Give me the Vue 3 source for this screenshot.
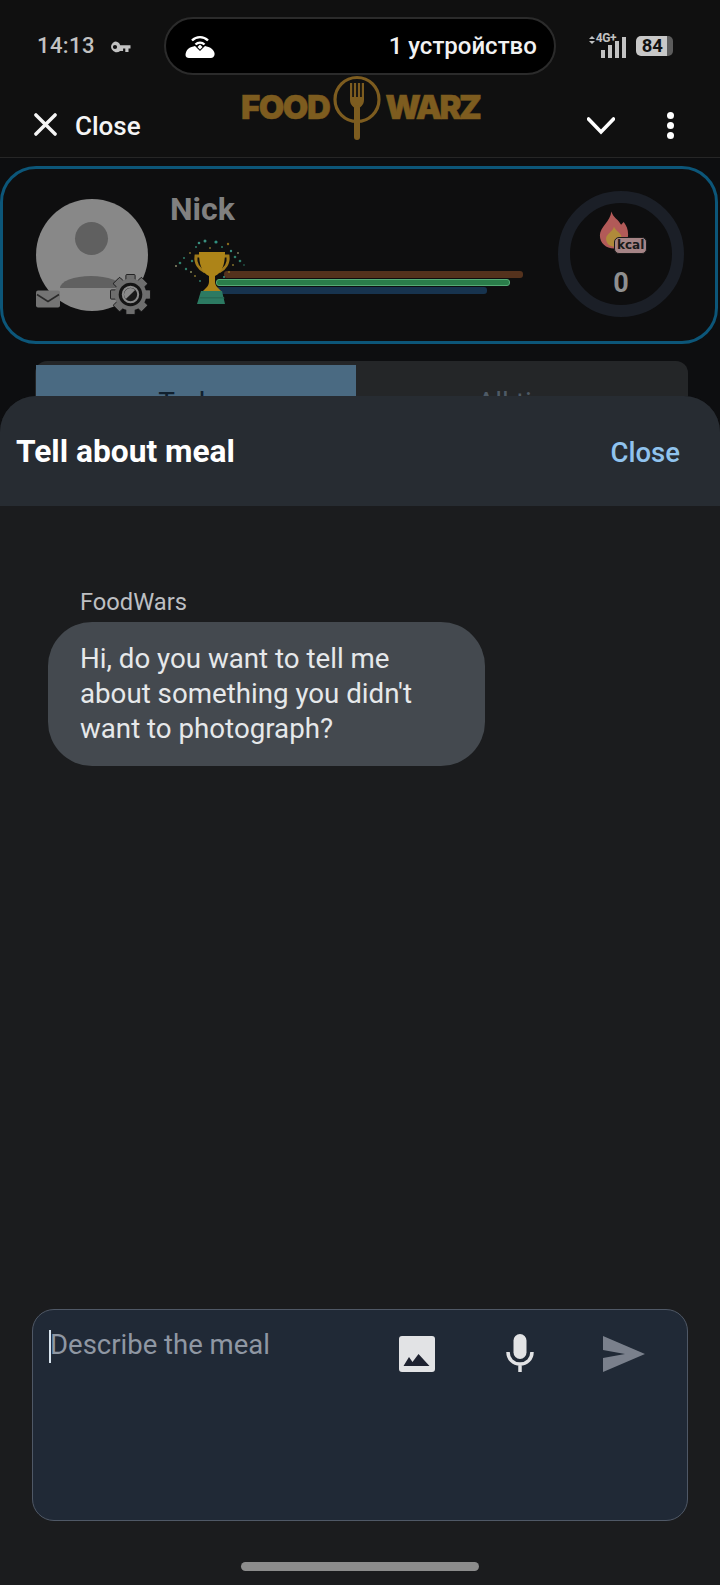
<template>
  <div class="screen">
    <div class="status-bar">
      <span class="time">14:13</span>
      <svg class="key" viewBox="0 0 21 12">
        <path fill-rule="evenodd" d="M5.500 0.500a5.500 5.500 0 0 1 5.200 3.700H21v3.400h-2v3.400h-3.200V7.600h-2.200v2.400h-3A5.500 5.500 0 1 1 5.500 .5zm0 3.400a2.100 2.100 0 1 0 0 4.200 2.100 2.100 0 0 0 0-4.200z" />
      </svg>
      <div class="hotspot-pill">
        <svg class="hotspot-icon" viewBox="0 0 30 24">
          <path d="M3 15C5 13 8 12.500 10 12L15 17l5-5c2 .5 5 1 7 3 2 2 3 4 2.500 6-.5 2-2 3-3.500 3H4c-2 0-3.500-1-3.500-3 0-2 1-4.500 2.500-6z" />
          <path d="M15 10.500l2.500 2.500L15 15.500 12.500 13z" />
          <path class="arc" d="M7 6.500c4.500-4.500 11.500-4.500 16 0M10.500 10.500c2.500-2.500 6.500-2.500 9 0" />
        </svg>
        <span class="pill-text">1 устройство</span>
      </div>
      <div class="signal">
        <span class="net-arrows">
          <i class="up"></i>
          <i class="down"></i>
        </span>
        <span class="net-type">4G+</span>
        <span class="bars">
          <i v-for="h in signalBars" :key="h" :style="{ height: h + 'px' }"></i>
        </span>
      </div>
      <div class="battery">84</div>
    </div>

    <div class="toolbar">
      <button class="close-btn">
        <svg class="x-icon" viewBox="0 0 24 24">
          <path d="M2 2l20 20M22 2L2 22" />
        </svg>
        <span>Close</span>
      </button>
      <div class="toolbar-right">
        <svg class="chevron" viewBox="0 0 28 18">
          <path d="M1.500 2l12.500 13L26.500 2" />
        </svg>
        <div class="dots"><i></i><i></i><i></i></div>
      </div>
      <div class="logo">
        <span>FOOD</span>
        <svg class="fork" viewBox="0 0 56 66">
          <circle class="ring" cx="28" cy="24.500" r="22" />
          <path class="tines" d="M21 8h2.200v14h1.700V8h2.200v14h1.800V8h2.200v14h1.700V8H35v17c0 5-4 8-7 9-3-1-7-4-7-9z" />
          <rect x="25" y="30" width="6" height="35" rx="3" />
        </svg>
        <span class="warz">WARZ</span>
      </div>
    </div>

    <div class="profile-card">
      <div class="avatar">
        <div class="avatar-circle">
          <div class="head"></div>
          <div class="shoulders"></div>
        </div>
        <svg class="mail" viewBox="0 0 24 17">
          <rect width="24" height="17" rx="2" />
          <path d="M1 4l11 7 11-7" />
        </svg>
        <svg class="gear" viewBox="0 0 40 40">
          <rect v-for="a in gearTeeth" :key="a" x="15.500" y="0.500" width="9" height="7" rx="1" :transform="`rotate(${a} 20 20)`" />
          <circle class="gear-body" cx="20" cy="20" r="15.500" />
          <circle class="gear-inner" cx="20" cy="20" r="11.500" />
          <circle class="gear-lens" cx="20" cy="20" r="7.500" />
          <path class="gear-glint" d="M15.500 24.500a6.300 6.300 0 0 1 9-9z" />
        </svg>
      </div>

      <div class="player">
        <div class="name">Nick</div>
        <div class="trophy-row">
          <div class="bars-stack">
            <div class="progress brown"></div>
            <div class="progress green"></div>
            <div class="progress blue"></div>
          </div>
          <svg class="trophy" viewBox="0 0 76 66">
            <circle v-for="(c, i) in confetti" :key="i" :cx="c[0]" :cy="c[1]" :r="c[2]" :fill="c[3]" />
            <path class="handles" d="M28 17h-4c-1 7 3 13 9 16M52 17h4c1 7-3 13-9 16" />
            <path class="cup" d="M27 13h26c0 11-2 20-10 24v6c0 3 2 5 4 7l2 2H31l2-2c2-2 4-4 4-7v-6c-8-4-10-13-10-24z" />
            <path class="base" d="M29 52h21l3 13H25z" />
            <path class="base-top" d="M28 58h24l.5 1.500h-25z" />
          </svg>
        </div>
      </div>

      <div class="calories">
        <svg class="flame" viewBox="0 0 34 42">
          <path class="flame-out" d="M14 0c2 7 8 9 11 15l3-3c3 4 5 8 5 14 0 10-7 16-16 16S1 36 1 27C1 18 13 11 14 0z" />
          <path class="flame-in" d="M17 17c1 4 6 6 8 10 2 5-1 13-8 13-5 0-9-4-9-9 0-6 8-8 9-14z" />
        </svg>
        <span class="kcal">kcal</span>
        <span class="cal-value">0</span>
      </div>
    </div>

    <div class="tabs">
      <div class="tab active">Today</div>
      <div class="tab">All time</div>
    </div>

    <div class="sheet">
      <div class="sheet-header">
        <h2>Tell about meal</h2>
        <span class="sheet-close">Close</span>
      </div>
      <div class="sheet-body">
        <div class="message">
          <div class="sender">FoodWars</div>
          <div class="bubble">Hi, do you want to tell me about something you didn't want to photograph?</div>
        </div>

        <div class="composer">
          <div class="placeholder"><i class="caret"></i>Describe the meal</div>
          <svg class="icon-image" viewBox="0 0 36 36">
            <rect width="36" height="36" rx="3" />
            <path d="M4.500 30l5.500-9 3.500 5 6-8 11 12z" />
          </svg>
          <svg class="icon-mic" viewBox="0 0 28 38">
            <rect x="7.500" y="0" width="13" height="25" rx="6.500" />
            <path class="mic-arc" d="M2 18c0 7 5 12 12 12s12-5 12-12M14 30v8" />
          </svg>
          <svg class="icon-send" viewBox="0 0 42 36">
            <path d="M0 0l42 18L0 36V22l22-4L0 14z" />
          </svg>
        </div>
      </div>
      <div class="home-indicator"></div>
    </div>
  </div>
</template>

<script setup>
const signalBars = [8, 13, 17, 21]
const gearTeeth = [0, 45, 90, 135, 180, 225, 270, 315]

// x, y, r, colour of the bits flying around the cup
const confetti = [
  [4, 27, 1, '#8a8a6a'], [8, 24, 1.300, '#2f7d6a'], [12, 19, 1, '#2f7d6a'],
  [14, 30, 1.200, '#2f7d6a'], [18, 14, 1, '#7a6a2a'], [20, 22, 1.200, '#2f7d6a'],
  [24, 8, 1, '#2f7d6a'], [27, 4, 1.300, '#3a8f80'], [33, 2, 1.500, '#3a8f80'],
  [38, 9, 1, '#7a6a2a'], [44, 3, 1.600, '#2f9080'], [50, 8, 1, '#2f7d6a'],
  [56, 5, 1.200, '#8a6a1a'], [59, 12, 1.200, '#3a8f80'], [63, 18, 1.300, '#2f7d6a'],
  [68, 22, 1.300, '#2f7d6a'], [61, 26, 1.100, '#7a6a2a'], [66, 14, 1, '#7a7a5a'],
  [19, 33, 1, '#8a8a5a'], [23, 37, 1.100, '#7a6a2a'], [57, 33, 1.100, '#8a6a1a'],
  [28, 42, 1, '#2f7d6a'], [52, 38, 1, '#3a8f80'], [72, 26, 0.800, '#2f7d6a'],
]
</script>

<style>
html,
body {
  margin: 0;
  background: #101010;
}
</style>

<style scoped>
.screen {
  position: relative;
  width: 720px;
  height: 1585px;
  overflow: hidden;
  background: #0d0e10;
  font-family: Roboto, "Liberation Sans", sans-serif;
}

.status-bar {
  display: flex;
  align-items: center;
  height: 92px;
  padding-left: 37px;
  box-sizing: border-box;
  background: #101010;
}

.time {
  margin-top: -2px;
  font-size: 22px;
  font-weight: 500;
  color: #c2c2c2;
  letter-spacing: 0.4px;
}

.key {
  width: 22px;
  height: 12px;
  margin: 2px 0 0 14px;
  fill: #c2c2c2;
}

.hotspot-pill {
  display: flex;
  align-items: center;
  justify-content: space-between;
  box-sizing: border-box;
  width: 392px;
  height: 58px;
  margin-left: 33px;
  padding: 0 17px 0 19px;
  background: #000;
  border: 2px solid #2b2b2b;
  border-radius: 29px;
}

.hotspot-icon {
  width: 30px;
  height: 24px;
  fill: #fff;
}

.hotspot-icon .arc {
  fill: none;
  stroke: #fff;
  stroke-width: 2.400;
}

.pill-text {
  font-size: 24px;
  font-weight: 500;
  color: #f2f2f2;
}

.signal {
  position: relative;
  width: 42px;
  height: 24px;
  margin-left: 33px;
}

.net-arrows {
  position: absolute;
  left: 0;
  top: 2px;
  display: flex;
  flex-direction: column;
  gap: 2px;
}

.net-arrows i {
  display: block;
  width: 0;
  height: 0;
  border-left: 3px solid transparent;
  border-right: 3px solid transparent;
}

.net-arrows .up {
  border-bottom: 3px solid #c2c2c2;
}

.net-arrows .down {
  border-top: 3px solid #c2c2c2;
}

.net-type {
  position: absolute;
  left: 7px;
  top: -3px;
  font-size: 12px;
  font-weight: 700;
  color: #c2c2c2;
  letter-spacing: -0.5px;
}

.bars {
  position: absolute;
  right: 0;
  left: 12px;
  bottom: 0;
  display: flex;
  align-items: flex-end;
  gap: 3px;
}

.bars i {
  display: block;
  width: 4px;
  background: #c2c2c2;
}

.battery {
  box-sizing: border-box;
  width: 37px;
  height: 20px;
  margin-left: 5px;
  padding-right: 4px;
  line-height: 20px;
  text-align: center;
  border-radius: 5px;
  background: linear-gradient(90deg, #c8c8c8 84%, #5c5c5c 84%);
  color: #111;
  font-size: 18.500px;
  font-weight: 700;
}

.toolbar {
  position: relative;
  display: flex;
  align-items: center;
  justify-content: space-between;
  box-sizing: border-box;
  height: 66px;
  padding: 0 46px 0 34px;
  background: #101010;
  border-bottom: 1px solid #262626;
}

.close-btn {
  display: flex;
  align-items: center;
  gap: 18px;
  padding: 0;
  background: none;
  border: 0;
  color: #f5f5f5;
  font-family: inherit;
  font-size: 26px;
  font-weight: 500;
}

.close-btn span {
  margin-top: 2px;
}

.x-icon {
  width: 23px;
  height: 23px;
  fill: none;
  stroke: #f5f5f5;
  stroke-width: 3.600;
  stroke-linecap: round;
}

.toolbar-right {
  display: flex;
  align-items: center;
  gap: 52px;
  margin-top: 1px;
}

.chevron {
  width: 28px;
  height: 18px;
  margin-top: 2px;
  fill: none;
  stroke: #fff;
  stroke-width: 3.600;
  stroke-linecap: round;
}

.dots {
  display: flex;
  flex-direction: column;
  gap: 3px;
}

.dots i {
  display: block;
  width: 7px;
  height: 7px;
  border-radius: 50%;
  background: #fff;
}

.logo {
  position: absolute;
  left: 241px;
  top: -17px;
  display: flex;
  align-items: flex-start;
  color: #7d5c1f;
  font-family: Inter, "Liberation Sans", sans-serif;
  font-size: 33px;
  font-weight: 900;
  letter-spacing: -1.500px;
  line-height: 34px;
  -webkit-text-stroke: 0.5px #7d5c1f;
}

.logo span {
  margin-top: 15px;
}

.logo .warz {
  letter-spacing: -2.500px;
}

.fork {
  width: 56px;
  height: 66px;
  fill: #7d5c1f;
}

.fork .ring {
  fill: none;
  stroke: #7d5c1f;
  stroke-width: 3.200;
}

.profile-card {
  display: flex;
  align-items: flex-start;
  box-sizing: border-box;
  height: 178px;
  margin: 8px 2px 0 0;
  padding: 30px 0 0 33px;
  background: #0e0e0f;
  border: 3px solid #0c5679;
  border-radius: 36px;
}

.avatar {
  position: relative;
  width: 112px;
  height: 112px;
  flex: none;
}

.avatar-circle {
  position: relative;
  width: 112px;
  height: 112px;
  overflow: hidden;
  border-radius: 50%;
  background: #888;
}

.head {
  position: absolute;
  left: 39px;
  top: 23px;
  width: 33px;
  height: 33px;
  border-radius: 50%;
  background: #606060;
}

.shoulders {
  position: absolute;
  left: 24px;
  top: 77px;
  width: 62px;
  height: 12px;
  border-radius: 31px 31px 0 0 / 12px 12px 0 0;
  background: #606060;
}

.mail {
  position: absolute;
  left: 0;
  top: 91px;
  width: 24px;
  height: 18px;
  fill: #747474;
}

.mail path {
  fill: none;
  stroke: #2a2a2a;
  stroke-width: 1.500;
}

.gear {
  position: absolute;
  left: 74px;
  top: 75px;
  width: 41px;
  height: 41px;
  fill: #6e6e6e;
  stroke: #0e0e0f;
  stroke-width: 0.8;
}

.gear-body {
  fill: #6e6e6e;
  stroke: none;
}

.gear-inner {
  fill: #141414;
  stroke: none;
}

.gear-lens {
  fill: #1a1a1a;
  stroke: #8a8a8a;
  stroke-width: 2;
}

.gear-glint {
  fill: #8a8a8a;
  stroke: none;
}

.player {
  flex: none;
  width: 367px;
  margin: -9px 0 0 22px;
}

.name {
  font-size: 32px;
  font-weight: 700;
  line-height: 38px;
  color: #808080;
}

.trophy-row {
  position: relative;
  height: 66px;
  margin-top: 11px;
}

.bars-stack {
  display: flex;
  flex-direction: column;
  align-items: flex-start;
  gap: 1px;
  padding: 32px 0 0 46px;
}

.progress {
  height: 7px;
  border-radius: 3px;
}

.progress.brown {
  width: 299px;
  margin-left: 8px;
  background: #54321d;
}

.progress.green {
  width: 294px;
  box-sizing: border-box;
  background: #2a7d4a;
  border: 1px solid #55aa75;
}

.progress.blue {
  width: 271px;
  background: #17334e;
}

.trophy {
  position: absolute;
  left: 2px;
  top: 0;
  width: 76px;
  height: 66px;
}

.handles {
  fill: none;
  stroke: #a07a1a;
  stroke-width: 3;
}

.cup {
  fill: #ad8418;
}

.base-top {
  fill: #266a55;
}

.base {
  fill: #2c7a62;
}

.calories {
  position: relative;
  flex: none;
  box-sizing: border-box;
  width: 126px;
  height: 126px;
  margin: -8px 0 0 21px;
  border: 12px solid #1b1f27;
  border-radius: 50%;
}

.flame {
  position: absolute;
  left: 29px;
  top: 6px;
  width: 30px;
  height: 42px;
}

.flame-out {
  fill: #b25a58;
}

.flame-in {
  fill: #b08a3a;
}

.kcal {
  position: absolute;
  left: 44px;
  top: 34px;
  padding: 0 2px;
  font-family: "DejaVu Sans", sans-serif;
  font-size: 12px;
  font-weight: 700;
  line-height: 15px;
  color: #1a1a1a;
  background: #a58486;
  border: 1.500px solid #1a1a1a;
  border-radius: 5px;
}

.cal-value {
  position: absolute;
  left: 0;
  right: 0;
  top: 64px;
  text-align: center;
  font-size: 27px;
  font-weight: 700;
  line-height: 32px;
  color: #8f8f8f;
}

.tabs {
  display: flex;
  box-sizing: border-box;
  height: 60px;
  margin: 17px 32px 0 35px;
  padding: 4px 0 0 1px;
  background: #242628;
  border-radius: 12px 12px 0 0;
}

.tab {
  box-sizing: border-box;
  width: 320px;
  padding: 21px 0 0 16px;
  text-align: center;
  font-size: 28px;
  color: #4e5a66;
}

.tab.active {
  padding-left: 0;
  background: #4a6a82;
  color: #10202e;
}

.sheet {
  position: absolute;
  left: 0;
  right: 0;
  top: 396px;
  bottom: 0;
  display: flex;
  flex-direction: column;
  overflow: hidden;
  background: #1b1c1e;
  border-radius: 36px 36px 0 0;
}

.sheet-header {
  display: flex;
  align-items: center;
  justify-content: space-between;
  box-sizing: border-box;
  height: 110px;
  flex: none;
  padding: 0 40px 0 16px;
  background: #272c32;
}

.sheet-header h2 {
  margin: 0;
  font-size: 31.700px;
  font-weight: 700;
  color: #fff;
}

.sheet-close {
  margin-top: 3px;
  font-size: 27.500px;
  font-weight: 500;
  color: #90c3ee;
}

.sheet-body {
  position: relative;
  display: flex;
  flex-direction: column;
  flex: 1;
  padding: 0 32px 64px;
}

.message {
  margin: 83px 0 0 16px;
}

.sender {
  margin-left: 32px;
  font-size: 23.700px;
  line-height: 26px;
  color: #bdbfc2;
}

.bubble {
  box-sizing: border-box;
  width: 437px;
  height: 144px;
  margin-top: 7px;
  padding: 19px 31px 19px 32px;
  background: #44494f;
  border-radius: 44px;
  font-size: 27.700px;
  line-height: 35px;
  color: #e6e8ea;
}

.composer {
  display: flex;
  align-items: flex-start;
  box-sizing: border-box;
  height: 212px;
  margin-top: auto;
  padding: 25px 0 0 17px;
  background: #202936;
  border: 1.500px solid #4f5866;
  border-radius: 22px;
}

.placeholder {
  position: relative;
  width: 349px;
  margin-top: -2px;
  font-size: 27.500px;
  line-height: 24px;
  color: #8f97a3;
}

.caret {
  position: absolute;
  left: -1px;
  top: -3px;
  width: 2px;
  height: 33px;
  background: #d8e4ee;
}

.icon-image {
  width: 36px;
  height: 36px;
  margin-top: 1px;
  fill: #e2e3e5;
}

.icon-image path {
  fill: #1e2230;
}

.icon-mic {
  width: 28px;
  height: 38px;
  margin: -1px 0 0 71px;
  fill: #e2e3e5;
}

.mic-arc {
  fill: none;
  stroke: #e2e3e5;
  stroke-width: 3.500;
}

.icon-send {
  width: 42px;
  height: 36px;
  margin: 1px 0 0 69px;
  fill: #7a808c;
}

.home-indicator {
  position: absolute;
  left: 241px;
  top: 1166px;
  width: 238px;
  height: 9px;
  border-radius: 5px;
  background: #8c8c8c;
}
</style>
